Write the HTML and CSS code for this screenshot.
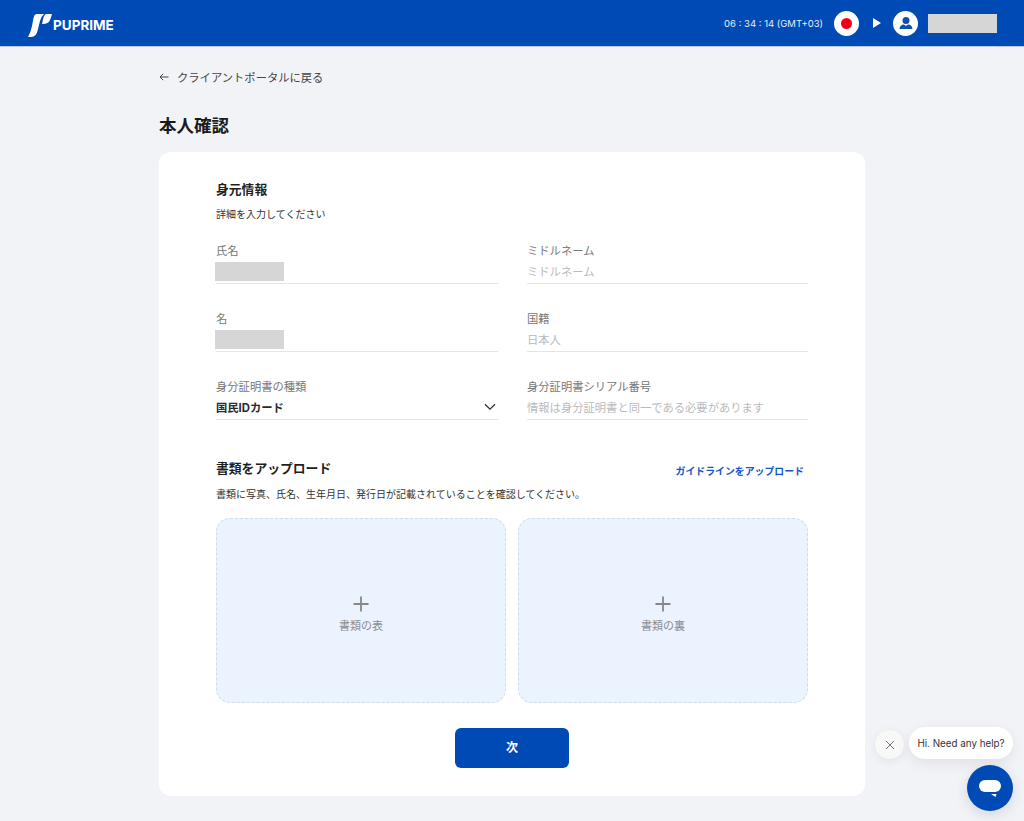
FILE: index.html
```html
<!DOCTYPE html>
<html lang="ja">
  <head>
    <meta charset="UTF-8" />
    <title>本人確認</title>
    <link rel="stylesheet" href="styles.css">
  </head>
  <body>
    <header class="topbar">
      <div class="logo">
        <svg class="logo-mark" width="24" height="24" viewBox="0 0 24 24">
          <path d="M8 0 H16 Q13.5 2 12 7 L9.5 17 Q8.5 22.5 3 23 H0 Q2.5 19 4 12 L5.5 4 Q6 1 8 0 Z" fill="#fff"/>
          <path d="M18 0 H24 Q23 4 21.5 7 Q20 9.5 15.5 10 H14 L15 5.5 Q15.8 1 18 0 Z" fill="#fff"/>
        </svg>
        <span class="logo-text">PUPRIME</span>
      </div>
      <div class="topbar-right">
        <span class="clock">06 : 34 : 14 (GMT+03)</span>
        <span class="round-icon"><span class="flag-dot"></span></span>
        <span class="caret"></span>
        <span class="round-icon">
          <svg width="16" height="16" viewBox="0 0 16 16">
            <circle cx="8" cy="5.4" r="3.5" fill="#0a4fb3"/>
            <path d="M1.5 14 Q2 9.8 6 9.6 L8 11 L10 9.6 Q14 9.8 14.5 14 Z" fill="#0a4fb3"/>
          </svg>
        </span>
        <span class="name-mask"></span>
      </div>
    </header>

    <main class="page">
      <a class="back-link" href="#">
        <svg width="10" height="10" viewBox="0 0 10 10">
          <path d="M9.5 5 H1 M4.2 1.8 L1 5 L4.2 8.2" fill="none" stroke="#444" stroke-width="1"/>
        </svg>
        <span>クライアントポータルに戻る</span>
      </a>
      <h1 class="page-title">本人確認</h1>

      <section class="card">
        <h2 class="section-title">身元情報</h2>
        <p class="section-note">詳細を入力してください</p>

        <div class="form-grid">
          <div class="field">
            <label>氏名</label>
            <div class="field-value"><span class="value-mask"></span></div>
          </div>
          <div class="field">
            <label>ミドルネーム</label>
            <div class="field-value placeholder">ミドルネーム</div>
          </div>
          <div class="field">
            <label>名</label>
            <div class="field-value"><span class="value-mask"></span></div>
          </div>
          <div class="field">
            <label>国籍</label>
            <div class="field-value placeholder">日本人</div>
          </div>
          <div class="field">
            <label>身分証明書の種類</label>
            <div class="field-value selected">
              <span>国民IDカード</span>
              <svg width="12" height="8" viewBox="0 0 12 8">
                <path d="M1 1.2 L6 6.2 L11 1.2" fill="none" stroke="#333" stroke-width="1.3"/>
              </svg>
            </div>
          </div>
          <div class="field">
            <label>身分証明書シリアル番号</label>
            <div class="field-value placeholder">情報は身分証明書と同一である必要があります</div>
          </div>
        </div>

        <div class="upload-head">
          <h2 class="section-title">書類をアップロード</h2>
          <a class="guide-link" href="#">ガイドラインをアップロード</a>
        </div>
        <p class="section-note upload-note">書類に写真、氏名、生年月日、発行日が記載されていることを確認してください。</p>

        <div class="upload-grid">
          <div class="upload-box">
            <svg width="16" height="16" viewBox="0 0 16 16">
              <path d="M8 0.5 V15.5 M0.5 8 H15.5" stroke="#85878b" stroke-width="1.8"/>
            </svg>
            <span>書類の表</span>
          </div>
          <div class="upload-box">
            <svg width="16" height="16" viewBox="0 0 16 16">
              <path d="M8 0.5 V15.5 M0.5 8 H15.5" stroke="#85878b" stroke-width="1.8"/>
            </svg>
            <span>書類の裏</span>
          </div>
        </div>

        <div class="actions">
          <button class="next-btn">次</button>
        </div>
      </section>
    </main>

    <div class="chat-close">
      <svg width="10" height="10" viewBox="0 0 10 10">
        <path d="M1 1 L9 9 M9 1 L1 9" stroke="#777" stroke-width="1"/>
      </svg>
    </div>
    <div class="chat-bubble">Hi. Need any help?</div>
    <div class="chat-btn">
      <svg width="24" height="24" viewBox="0 0 24 24">
        <rect x="1" y="4" width="22" height="12" rx="6" fill="#fff"/>
        <path d="M13 18 L18.5 18 L17.5 21 Z" fill="#fff"/>
      </svg>
    </div>
  </body>
</html>
```

FILE: styles.css
```css
* {
  margin: 0;
  padding: 0;
  box-sizing: border-box;
}

body {
  font-family: Inter, 'Noto Sans CJK JP', sans-serif;
  background: #f2f3f6;
  color: #222;
  height: 821px;
  overflow: hidden;
}

.topbar {
  height: 47px;
  background: #004ab5;
  border-bottom: 1px solid #b9cdea;
  display: flex;
  align-items: center;
  justify-content: space-between;
  padding: 0 27px 0 28px;
}

.logo {
  display: flex;
  align-items: center;
  gap: 1px;
}

.logo-mark {
  margin-top: 6px;
}

.logo-text {
  color: #fff;
  font-size: 13.5px;
  font-weight: 700;
  margin-top: 3px;
}

.topbar-right {
  display: flex;
  align-items: center;
}

.clock {
  color: #e8eef8;
  font-size: 9.5px;
  margin-right: 11px;
}

.round-icon {
  width: 25px;
  height: 25px;
  border-radius: 50%;
  background: #fff;
  display: flex;
  align-items: center;
  justify-content: center;
}

.flag-dot {
  width: 11px;
  height: 11px;
  border-radius: 50%;
  background: #f0001c;
}

.caret {
  width: 0;
  height: 0;
  border-left: 8px solid #fff;
  border-top: 5px solid transparent;
  border-bottom: 5px solid transparent;
  margin: 0 12px 0 14px;
}

.name-mask {
  width: 69px;
  height: 19px;
  background: #d6d6d6;
  margin-left: 10px;
}

.page {
  width: 706px;
  margin-left: 159px;
}

.back-link {
  display: flex;
  align-items: center;
  gap: 8px;
  height: 16px;
  margin-top: 22px;
  color: #444;
  font-size: 11.3px;
  text-decoration: none;
}

.page-title {
  font-size: 17.5px;
  line-height: 24px;
  font-weight: 700;
  color: #1a1a1a;
  margin-top: 29px;
}

.card {
  background: #fff;
  border-radius: 12px;
  height: 644px;
  margin-top: 14px;
  padding: 29px 57px 0 57px;
}

.section-title {
  font-size: 12.8px;
  line-height: 18px;
  font-weight: 700;
  color: #1f1f1f;
}

.section-note {
  font-size: 10px;
  line-height: 14px;
  margin-top: 8px;
  color: #333;
}

.upload-note {
  margin-top: 9px;
}

.form-grid {
  display: grid;
  grid-template-columns: 282px 281px;
  column-gap: 29px;
  row-gap: 27px;
  margin-top: 22px;
}

.field label {
  display: block;
  font-size: 11.3px;
  line-height: 16px;
  color: #777;
}

.field-value {
  height: 23px;
  margin-top: 2px;
  padding-bottom: 2px;
  border-bottom: 1px solid #e4e5e8;
  display: flex;
  align-items: center;
  font-size: 11.3px;
}

.placeholder {
  color: #b9babd;
}

.selected {
  justify-content: space-between;
  font-weight: 700;
  color: #2a2a2a;
  padding-right: 2px;
}

.value-mask {
  width: 69px;
  height: 19px;
  background: #d6d6d6;
  margin-left: -1px;
  margin-top: 1px;
}

.upload-head {
  display: flex;
  align-items: center;
  justify-content: space-between;
  margin-top: 40px;
  padding-right: 4px;
}

.guide-link {
  font-size: 9.9px;
  font-weight: 700;
  color: #1356cc;
  text-decoration: none;
  margin-top: 4px;
}

.upload-grid {
  display: grid;
  grid-template-columns: 290px 290px;
  column-gap: 12px;
  margin-top: 17px;
}

.upload-box {
  height: 185px;
  background: #ebf3fe;
  border: 1px dashed #cfdcec;
  border-radius: 14px;
  display: flex;
  flex-direction: column;
  align-items: center;
  justify-content: center;
  gap: 5px;
  padding-top: 7px;
  font-size: 11px;
  color: #8a8d92;
}

.actions {
  display: flex;
  justify-content: center;
  margin-top: 25px;
}

.next-btn {
  width: 114px;
  height: 40px;
  padding-bottom: 4px;
  background: #004ab5;
  color: #fff;
  border: none;
  border-radius: 6px;
  font-family: inherit;
  font-size: 12px;
  font-weight: 700;
}

.chat-close {
  position: absolute;
  left: 875px;
  top: 730px;
  width: 29px;
  height: 29px;
  border-radius: 50%;
  background: #f8f8f9;
  box-shadow: 0 2px 10px rgba(0, 0, 0, 0.07);
  display: flex;
  align-items: center;
  justify-content: center;
}

.chat-bubble {
  position: absolute;
  left: 909px;
  top: 727px;
  width: 104px;
  height: 32px;
  border-radius: 16px;
  background: #fff;
  box-shadow: 0 4px 14px rgba(0, 0, 0, 0.08);
  display: flex;
  align-items: center;
  justify-content: center;
  font-size: 9.8px;
  color: #333;
}

.chat-btn {
  position: absolute;
  left: 967px;
  top: 765px;
  width: 46px;
  height: 46px;
  border-radius: 50%;
  background: #004ab5;
  box-shadow: 0 4px 14px rgba(0, 0, 0, 0.12);
  display: flex;
  align-items: center;
  justify-content: center;
}
```
